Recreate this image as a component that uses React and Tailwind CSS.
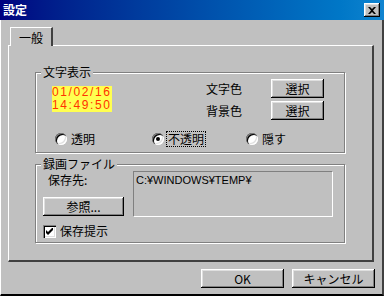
const raised =
  "shadow-[inset_-1px_-1px_0_#000,inset_1px_1px_0_#fff,inset_-2px_-2px_0_#808080,inset_2px_2px_0_#dfdfdf]";
const etched = "border border-[#808080] shadow-[inset_1px_1px_0_#fff,1px_1px_0_#fff]";

const Button = ({ className = "", children }) => (
  <button
    className={`flex items-center justify-center bg-[#c0c0c0] text-[12px] leading-[14px] text-black ${raised} ${className}`}
  >
    {children}
  </button>
);

const Radio = ({ checked, focused, label, className = "" }) => (
  <label className={`flex items-center ${className}`}>
    <span className="relative flex h-[12px] w-[12px] items-center justify-center rounded-full bg-white shadow-[inset_1px_1px_0_#808080,inset_2px_2px_0_#000,inset_-1px_-1px_0_#fff,inset_-2px_-2px_0_#dfdfdf]">
      {checked && <span className="h-[4px] w-[4px] rounded-full bg-black" />}
    </span>
    <span
      className={`ml-[2px] px-[1px] leading-[14px] ${
        focused ? "border border-dotted border-black" : "border border-transparent"
      }`}
    >
      {label}
    </span>
  </label>
);

const Legend = ({ children }) => (
  <legend className="ml-[5px] bg-[#c0c0c0] px-[2px] leading-[14px]">{children}</legend>
);

export default function App() {
  return (
    <div
      className="flex h-[296px] w-[384px] flex-col bg-[#c0c0c0] text-[12px] text-black"
      style={{ fontFamily: '"Noto Sans CJK JP", "Liberation Sans", sans-serif' }}
    >
      {/* title bar */}
      <div className="flex h-[20px] shrink-0 items-center justify-between bg-gradient-to-r from-[#000080] to-[#1084d0] pl-[3px] pr-[4px]">
        <span className="text-[12px] font-bold leading-[14px] text-white">設定</span>
        <button className={`flex h-[14px] w-[16px] items-center justify-center bg-[#c0c0c0] ${raised}`}>
          <svg width="8" height="7" viewBox="0 0 8 7">
            <path d="M0 0h2l2 2 2-2h2L5 3.5 8 7H6L4 5 2 7H0l3-3.5z" fill="#000" />
          </svg>
        </button>
      </div>

      {/* body */}
      <div className="flex flex-1 flex-col border-b-2 border-l border-r-2 border-b-[#000] border-l-white border-r-[#404040] pl-[7px] pt-[7px]">
        {/* tab */}
        <div className="relative z-10 ml-[2px] flex h-[19px] w-[43px] items-start justify-center border-l border-r-2 border-t border-l-white border-r-[#404040] border-t-white bg-[#c0c0c0] pt-[3px] leading-[14px]">
          一般
        </div>

        {/* panel */}
        <div className="-mt-px h-[217px] w-[366px] border-b-2 border-l border-r-2 border-t border-b-[#404040] border-l-white border-r-[#404040] border-t-white pl-[26px] pt-[19px]">
          <fieldset className={`w-[310px] ${etched} pb-[5px]`}>
            <Legend>文字表示</Legend>
            <div className="flex">
              <div
                className="ml-[16px] mt-[7px] flex flex-col items-start text-[12px] leading-[13px] tracking-[1.6px] text-[#ff3300]"
                style={{ fontFamily: '"Liberation Sans", sans-serif' }}
              >
                <span className="bg-[#ffff50]">01/02/16</span>
                <span className="bg-[#ffff50]">14:49:50</span>
              </div>
              <div className="ml-auto mr-[20px] grid grid-cols-[auto_53px] items-center gap-x-[29px] gap-y-[3px]">
                <span className="leading-[14px]">文字色</span>
                <Button className="h-[19px] w-[53px]">選択</Button>
                <span className="leading-[14px]">背景色</span>
                <Button className="h-[19px] w-[53px]">選択</Button>
              </div>
            </div>
            <div className="mt-[11px] flex pl-[19px]">
              <Radio label="透明" className="w-[97px]" />
              <Radio label="不透明" checked focused className="w-[94px]" />
              <Radio label="隠す" />
            </div>
          </fieldset>

          <fieldset className={`mt-[4px] w-[310px] ${etched} pb-[4px]`}>
            <Legend>録画ファイル</Legend>
            <div className="flex">
              <div className="ml-[7px] flex w-[82px] flex-col items-start">
                <span className="ml-[5px] mt-[2px] leading-[14px]">保存先:</span>
                <Button className="mt-[10px] h-[19px] w-[81px]">参照...</Button>
                <label className="mt-[8px] flex items-center">
                  <span className="flex h-[13px] w-[13px] items-center justify-center bg-white shadow-[inset_1px_1px_0_#808080,inset_2px_2px_0_#000,inset_-1px_-1px_0_#fff,inset_-2px_-2px_0_#dfdfdf]">
                    <svg width="7" height="7" viewBox="0 0 7 7">
                      <path d="M0 2v3l2 2 5-5V-1L2 4z" fill="#000" />
                    </svg>
                  </span>
                  <span className="ml-[4px] leading-[14px]">保存提示</span>
                </label>
              </div>
              <div
                className="ml-[8px] h-[46px] w-[200px] border border-b-white border-l-[#808080] border-r-white border-t-[#808080] pl-[2px] pt-[2px] text-[11px] leading-[12px]"
                style={{ fontFamily: '"Liberation Sans", sans-serif' }}
              >
                C:¥WINDOWS¥TEMP¥
              </div>
            </div>
          </fieldset>
        </div>

        {/* bottom buttons */}
        <div className="mr-[7px] mt-[7px] flex justify-end gap-[8px]">
          <Button className="h-[19px] w-[83px]">OK</Button>
          <Button className="h-[19px] w-[83px]">キャンセル</Button>
        </div>
      </div>
    </div>
  );
}
